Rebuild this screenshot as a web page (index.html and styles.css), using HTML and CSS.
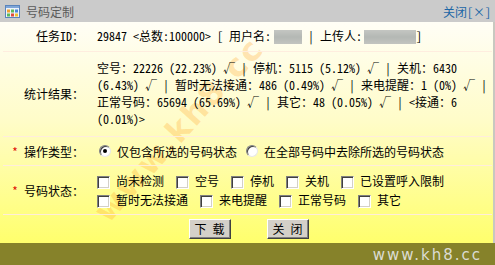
FILE: index.html
```html
<!DOCTYPE html>
<html lang="zh-CN">
<head>
<meta charset="utf-8">
<title>号码定制</title>
<link rel="stylesheet" href="styles.css">
</head>
<body>
<div class="win">
  <div class="titlebar">
    <svg class="icon" width="15" height="13" viewBox="0 0 15 13">
      <rect x="0.5" y="0.5" width="14" height="12" fill="#eef4fc" stroke="#5a84bc"/>
      <rect x="1" y="1" width="13" height="2" fill="#7fa6d8"/>
      <rect x="2" y="4.5" width="3" height="3" fill="#f0a030"/>
      <rect x="6" y="4.5" width="3" height="3" fill="#5cb85c"/>
      <rect x="10" y="4.5" width="3" height="3" fill="#4a86d8"/>
      <rect x="2" y="8.5" width="3" height="3" fill="#5cb85c"/>
      <rect x="6" y="8.5" width="3" height="3" fill="#e04a3a"/>
      <rect x="10" y="8.5" width="3" height="3" fill="#f0c030"/>
    </svg>
    <span class="title">号码定制</span>
    <a class="close" href="#">关闭[×]</a>
  </div>
  <div class="body">
    <div class="row r-id">
      <div class="label">任务ID：</div>
      <div class="val">29847 &lt;总数:100000&gt; [ 用户名:<span class="mask m1"></span> | 上传人:<span class="mask m2"></span>]</div>
    </div>
    <div class="row r-stat">
      <div class="label">统计结果：</div>
      <div class="val stats">
        <div>空号：22226 (22.23%) √ | 停机：5115 (5.12%) √ | 关机：6430</div>
        <div>(6.43%) √ | 暂时无法接通：486 (0.49%) √ | 来电提醒：1 (0%) √ |</div>
        <div>正常号码：65694 (65.69%) √ | 其它：48 (0.05%) √ | &lt;接通：6</div>
        <div>(0.01%)&gt;</div>
      </div>
    </div>
    <div class="row r-op">
      <div class="label"><span class="req">*</span>操作类型：</div>
      <div class="val opts">
        <label class="opt"><input type="radio" name="op" checked><span>仅包含所选的号码状态</span></label>
        <label class="opt"><input type="radio" name="op"><span>在全部号码中去除所选的号码状态</span></label>
      </div>
    </div>
    <div class="row r-status">
      <div class="label"><span class="req">*</span>号码状态：</div>
      <div class="val checks">
        <div class="line">
          <label class="chk"><input type="checkbox"><span>尚未检测</span></label>
          <label class="chk"><input type="checkbox"><span>空号</span></label>
          <label class="chk"><input type="checkbox"><span>停机</span></label>
          <label class="chk"><input type="checkbox"><span>关机</span></label>
          <label class="chk"><input type="checkbox"><span>已设置呼入限制</span></label>
        </div>
        <div class="line">
          <label class="chk"><input type="checkbox"><span>暂时无法接通</span></label>
          <label class="chk"><input type="checkbox"><span>来电提醒</span></label>
          <label class="chk"><input type="checkbox"><span>正常号码</span></label>
          <label class="chk"><input type="checkbox"><span>其它</span></label>
        </div>
      </div>
    </div>
    <div class="btns">
      <button class="btn" type="button">下 载</button>
      <button class="btn" type="button">关 闭</button>
    </div>
    <div class="wm">www.kh8.cc</div>
  </div>
  <div class="footer">www.kh8.cc</div>
</div>
</body>
</html>
```

FILE: styles.css
```css
* { box-sizing: border-box; }
html, body { margin: 0; padding: 0; }
body {
  width: 495px;
  height: 265px;
  overflow: hidden;
  font-family: "Noto Sans Mono CJK SC", "Noto Sans CJK SC", sans-serif;
  font-size: 12px;
  color: #000;
}
.win {
  width: 495px;
  height: 265px;
  display: flex;
  flex-direction: column;
}
.titlebar {
  height: 22px;
  background: #cbcbcb;
  display: flex;
  align-items: center;
  padding: 0 4px 0 5px;
}
.icon { display: block; margin-right: 6px; margin-top: 1px; }
.title { color: #5a5a5a; font-size: 12px; }
.close {
  margin-left: auto;
  color: #1b66a6;
  text-decoration: none;
  font-size: 12px;
}
.body {
  position: relative;
  overflow: hidden;
  flex: 1;
  background: linear-gradient(#fffef6 0%, #fffcc8 45%, #ffff6c 100%);
  border-right: 2px solid #c8c8c0;
  padding: 0 1px 0 3px;
}
.row {
  display: grid;
  grid-template-columns: 81px 1fr;
  column-gap: 13px;
  align-items: center;
  border-bottom: 1px solid rgba(255, 236, 222, 0.95);
  position: relative;
  z-index: 1;
}
.label {
  text-align: right;
  white-space: nowrap;
}
.req { color: #e00000; margin-right: 6px; }
.r-id { height: 30px; padding-bottom: 2px; }
.r-stat { padding: 7px 0 9px; }
.stats { line-height: 17px; white-space: nowrap; }
.r-op { height: 29px; }
.r-status { padding: 5px 0 5px; }
.mask {
  display: inline-block;
  height: 14px;
  vertical-align: -3px;
  background: linear-gradient(#c4c6c2, #b4b8b4 50%, #c2c4c0);
}
.m1 { width: 28px; margin-left: 3px; }
.m2 { width: 52px; margin-left: 2px; }
.opts { display: flex; align-items: center; gap: 7px; }
.opt { display: inline-flex; align-items: center; }
input[type="radio"] {
  appearance: none;
  -webkit-appearance: none;
  width: 12px;
  height: 12px;
  margin: 0 6px 0 2px;
  border-radius: 50%;
  background: #fff;
  border: 1px solid;
  border-color: #808080 #e8e8e8 #e8e8e8 #808080;
  box-shadow: inset 1px 1px 0 #404040;
  position: relative;
}
input[type="radio"]:checked::after {
  content: "";
  position: absolute;
  left: 3px;
  top: 3px;
  width: 4px;
  height: 4px;
  border-radius: 50%;
  background: #000;
}
.checks .line { height: 19px; display: flex; align-items: center; }
.chk { display: inline-flex; align-items: center; margin-right: 12px; }
input[type="checkbox"] {
  appearance: none;
  -webkit-appearance: none;
  width: 13px;
  height: 13px;
  margin: 4px 6px 0 0;
  background: #fff;
  border: 1px solid;
  border-color: #808080 #ffffff #ffffff #808080;
  box-shadow: inset 1px 1px 0 #404040, inset -1px -1px 0 #d4d0c8;
}
.btns {
  height: 29px;
  display: flex;
  justify-content: center;
  align-items: flex-start;
  gap: 36px;
  padding: 4px 0 0 2px;
  position: relative;
  z-index: 1;
}
.btn {
  width: 42px;
  height: 20px;
  padding: 0;
  font-family: "Noto Sans Mono CJK SC", "Noto Sans CJK SC", sans-serif;
  font-size: 12px;
  line-height: 16px;
  background: #d4d0c8;
  border: 1px solid;
  border-color: #ffffff #404040 #404040 #ffffff;
  box-shadow: inset -1px -1px 0 #808080;
  color: #000;
}
.wm {
  position: absolute;
  left: 100px;
  top: 175px;
  font-family: "DejaVu Sans", sans-serif;
  font-size: 32px;
  font-weight: bold;
  letter-spacing: 2px;
  line-height: 40px;
  color: rgba(255, 165, 40, 0.28);
  transform: rotate(-48deg);
  transform-origin: left center;
  pointer-events: none;
  white-space: nowrap;
}
.footer {
  height: 22px;
  background: #86822a;
  color: #dcdcd2;
  font-family: "DejaVu Sans", sans-serif;
  font-size: 15px;
  letter-spacing: 2px;
  text-align: right;
  padding: 2px 13px 0 0;
  line-height: 20px;
}
```
